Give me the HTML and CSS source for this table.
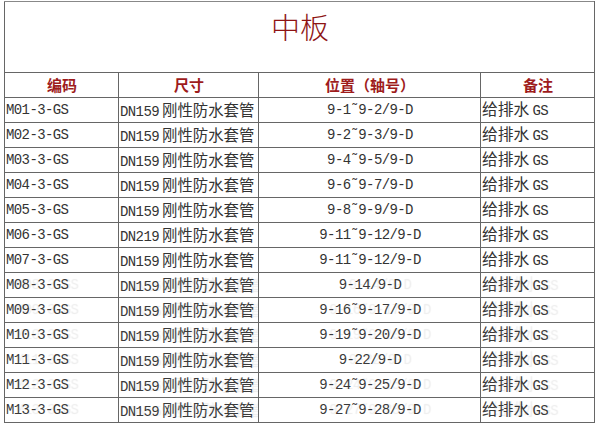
FILE: index.html
```html
<!DOCTYPE html>
<html lang="zh">
<head>
<meta charset="utf-8">
<title>中板</title>
<link rel="stylesheet" href="styles.css">
</head>
<body>
<table class="sheet">
  <colgroup>
    <col class="c1"><col class="c2"><col class="c3"><col class="c4">
  </colgroup>
  <tr class="title-row"><td colspan="4" class="title">中板</td></tr>
  <tr class="head">
    <th>编码</th><th>尺寸</th><th>位置（轴号）</th><th>备注</th>
  </tr>
  <tr><td>M01-3-GS</td><td>DN159<span class="cj">刚性防水套管</span></td><td class="mid">9-1˜9-2/9-D</td><td><span class="cj">给排水</span>GS</td></tr>
  <tr><td>M02-3-GS</td><td>DN159<span class="cj">刚性防水套管</span></td><td class="mid">9-2˜9-3/9-D</td><td><span class="cj">给排水</span>GS</td></tr>
  <tr><td>M03-3-GS</td><td>DN159<span class="cj">刚性防水套管</span></td><td class="mid">9-4˜9-5/9-D</td><td><span class="cj">给排水</span>GS</td></tr>
  <tr><td>M04-3-GS</td><td>DN159<span class="cj">刚性防水套管</span></td><td class="mid">9-6˜9-7/9-D</td><td><span class="cj">给排水</span>GS</td></tr>
  <tr><td>M05-3-GS</td><td>DN159<span class="cj">刚性防水套管</span></td><td class="mid">9-8˜9-9/9-D</td><td><span class="cj">给排水</span>GS</td></tr>
  <tr><td>M06-3-GS</td><td>DN219<span class="cj">刚性防水套管</span></td><td class="mid">9-11˜9-12/9-D</td><td><span class="cj">给排水</span>GS</td></tr>
  <tr><td>M07-3-GS</td><td>DN159<span class="cj">刚性防水套管</span></td><td class="mid">9-11˜9-12/9-D</td><td><span class="cj">给排水</span>GS</td></tr>
  <tr class="ghost"><td>M08-3-GS</td><td>DN159<span class="cj">刚性防水套管</span></td><td class="mid">9-14/9-D</td><td><span class="cj">给排水</span>GS</td></tr>
  <tr class="ghost"><td>M09-3-GS</td><td>DN159<span class="cj">刚性防水套管</span></td><td class="mid">9-16˜9-17/9-D</td><td><span class="cj">给排水</span>GS</td></tr>
  <tr class="ghost"><td>M10-3-GS</td><td>DN159<span class="cj">刚性防水套管</span></td><td class="mid">9-19˜9-20/9-D</td><td><span class="cj">给排水</span>GS</td></tr>
  <tr class="ghost"><td>M11-3-GS</td><td>DN159<span class="cj">刚性防水套管</span></td><td class="mid">9-22/9-D</td><td><span class="cj">给排水</span>GS</td></tr>
  <tr class="ghost"><td>M12-3-GS</td><td>DN159<span class="cj">刚性防水套管</span></td><td class="mid">9-24˜9-25/9-D</td><td><span class="cj">给排水</span>GS</td></tr>
  <tr class="ghost"><td>M13-3-GS</td><td>DN159<span class="cj">刚性防水套管</span></td><td class="mid">9-27˜9-28/9-D</td><td><span class="cj">给排水</span>GS</td></tr>
</table>
</body>
</html>
```

FILE: styles.css
```css
html, body {
  margin: 0;
  padding: 0;
  background: #ffffff;
}

body {
  padding: 1px 0 0 4px;
}

.sheet {
  border-collapse: collapse;
  table-layout: fixed;
  width: 590px;
  border: 1px solid #555555;
  font-family: "Liberation Mono", "Noto Sans CJK SC", monospace;
  font-size: 14px;
  letter-spacing: -0.6px;
  color: #333333;
}

.c1 { width: 114px; }
.c2 { width: 140px; }
.c3 { width: 222px; }
.c4 { width: 114px; }

.sheet td,
.sheet th {
  border: 1px solid #666666;
  height: 24px;
  padding: 0 0 0 1px;
  white-space: nowrap;
  overflow: hidden;
  text-align: left;
  vertical-align: middle;
  line-height: 16px;
}

.sheet .title-row td {
  height: 64px;
  border-top-color: #888888;
}

.sheet td.title {
  text-align: center;
  vertical-align: top;
  padding-top: 6px;
  font-family: "Noto Sans CJK SC", sans-serif;
  font-weight: 300;
  font-size: 29px;
  letter-spacing: 0;
  line-height: 36px;
  color: #8e1414;
}

.head th {
  text-align: center;
  font-family: "Noto Sans CJK SC", sans-serif;
  font-weight: bold;
  font-size: 15px;
  letter-spacing: 0;
  color: #9e1c1c;
}

.sheet td.mid {
  text-align: center;
}

.cj {
  font-family: "Noto Sans CJK SC", sans-serif;
  font-size: 15.4px;
  line-height: 16px;
  letter-spacing: 0;
  padding-left: 3px;
}

.sheet td:last-child .cj {
  padding-left: 0;
  padding-right: 3px;
  font-size: 15.8px;
}

.ghost td {
  color: #3a3a3a;
  text-shadow: 10px 0 1px rgba(0, 0, 0, 0.08);
}
```
